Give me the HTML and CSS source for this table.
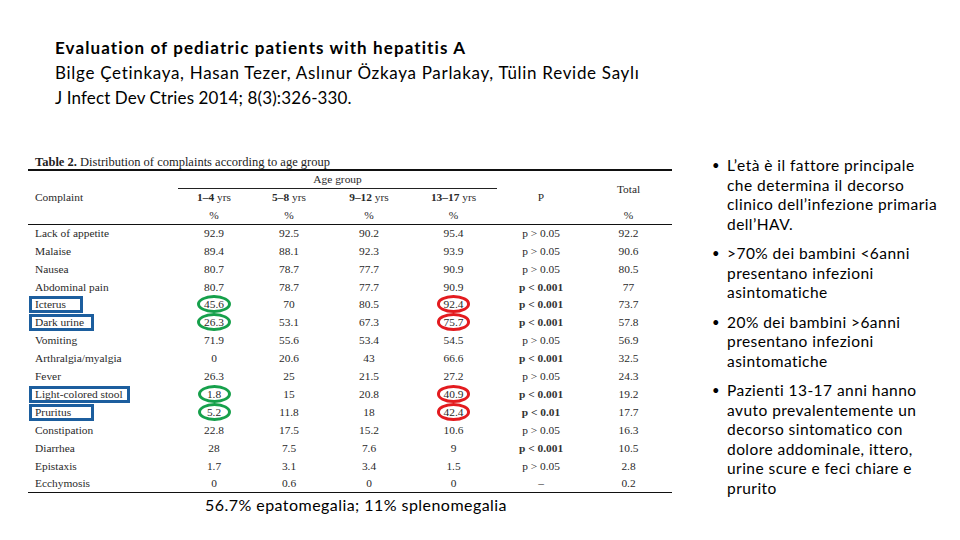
FILE: index.html
```html
<!DOCTYPE html>
<html lang="it">
<head>
<meta charset="utf-8">
<title>Evaluation of pediatric patients with hepatitis A</title>
<link rel="stylesheet" href="styles.css">
</head>
<body>
<header class="ref">
  <div class="ref-title">Evaluation of pediatric patients with hepatitis A</div>
  <div class="ref-line ref-authors">Bilge Çetinkaya, Hasan Tezer, Aslınur Özkaya Parlakay, Tülin Revide Saylı</div>
  <div class="ref-line ref-journal">J Infect Dev Ctries 2014; 8(3):326-330.</div>
</header>
<main class="main">
  <section class="figure">
    <div class="tbl-title"><b>Table 2.</b> Distribution of complaints according to age group</div>
    <table class="tbl">
      <colgroup>
        <col class="c-name"><col class="c-a"><col class="c-b"><col class="c-c"><col class="c-d"><col class="c-p"><col class="c-t">
      </colgroup>
      <thead>
        <tr class="h1">
          <th rowspan="3" class="left">Complaint</th>
          <th colspan="4" class="age">Age group</th>
          <th rowspan="3" class="ph">P</th>
          <th rowspan="2">Total</th>
        </tr>
        <tr class="h2">
          <th><b>1–4</b> yrs</th><th><b>5–8</b> yrs</th><th><b>9–12</b> yrs</th><th><b>13–17</b> yrs</th>
        </tr>
        <tr class="h3">
          <th>%</th><th>%</th><th>%</th><th>%</th><th>%</th>
        </tr>
      </thead>
      <tbody>
        <tr><td class="left">Lack of appetite</td><td>92.9</td><td>92.5</td><td>90.2</td><td>95.4</td><td>p &gt; 0.05</td><td>92.2</td></tr>
        <tr><td class="left">Malaise</td><td>89.4</td><td>88.1</td><td>92.3</td><td>93.9</td><td>p &gt; 0.05</td><td>90.6</td></tr>
        <tr><td class="left">Nausea</td><td>80.7</td><td>78.7</td><td>77.7</td><td>90.9</td><td>p &gt; 0.05</td><td>80.5</td></tr>
        <tr><td class="left">Abdominal pain</td><td>80.7</td><td>78.7</td><td>77.7</td><td>90.9</td><td class="sig">p &lt; 0.001</td><td>77</td></tr>
        <tr><td class="left"><span class="box box-icterus">Icterus</span></td><td><span class="ring green">45.6</span></td><td>70</td><td>80.5</td><td><span class="ring red">92.4</span></td><td class="sig">p &lt; 0.001</td><td>73.7</td></tr>
        <tr><td class="left"><span class="box box-dark">Dark urine</span></td><td><span class="ring green">26.3</span></td><td>53.1</td><td>67.3</td><td><span class="ring red">75.7</span></td><td class="sig">p &lt; 0.001</td><td>57.8</td></tr>
        <tr><td class="left">Vomiting</td><td>71.9</td><td>55.6</td><td>53.4</td><td>54.5</td><td>p &gt; 0.05</td><td>56.9</td></tr>
        <tr><td class="left">Arthralgia/myalgia</td><td>0</td><td>20.6</td><td>43</td><td>66.6</td><td class="sig">p &lt; 0.001</td><td>32.5</td></tr>
        <tr><td class="left">Fever</td><td>26.3</td><td>25</td><td>21.5</td><td>27.2</td><td>p &gt; 0.05</td><td>24.3</td></tr>
        <tr><td class="left"><span class="box box-stool">Light-colored stool</span></td><td><span class="ring green">1.8</span></td><td>15</td><td>20.8</td><td><span class="ring red">40.9</span></td><td class="sig">p &lt; 0.001</td><td>19.2</td></tr>
        <tr><td class="left"><span class="box box-pruritus">Pruritus</span></td><td><span class="ring green">5.2</span></td><td>11.8</td><td>18</td><td><span class="ring red">42.4</span></td><td class="sig">p &lt; 0.01</td><td>17.7</td></tr>
        <tr><td class="left">Constipation</td><td>22.8</td><td>17.5</td><td>15.2</td><td>10.6</td><td>p &gt; 0.05</td><td>16.3</td></tr>
        <tr><td class="left">Diarrhea</td><td>28</td><td>7.5</td><td>7.6</td><td>9</td><td class="sig">p &lt; 0.001</td><td>10.5</td></tr>
        <tr><td class="left">Epistaxis</td><td>1.7</td><td>3.1</td><td>3.4</td><td>1.5</td><td>p &gt; 0.05</td><td>2.8</td></tr>
        <tr><td class="left">Ecchymosis</td><td>0</td><td>0.6</td><td>0</td><td>0</td><td>–</td><td>0.2</td></tr>
      </tbody>
    </table>
    <p class="note">56.7% epatomegalia; 11% splenomegalia</p>
  </section>
  <ul class="bullets">
    <li>L’età è il fattore principale<br>che determina il decorso<br>clinico dell’infezione primaria<br>dell’HAV.</li>
    <li>&gt;70% dei bambini &lt;6anni<br>presentano infezioni<br>asintomatiche</li>
    <li>20% dei bambini &gt;6anni<br>presentano infezioni<br>asintomatiche</li>
    <li>Pazienti 13-17 anni hanno<br>avuto prevalentemente un<br>decorso sintomatico con<br>dolore addominale, ittero,<br>urine scure e feci chiare e<br>prurito</li>
  </ul>
</main>
</body>
</html>
```
FILE: styles.css
```css
* { box-sizing: border-box; }
html, body { margin: 0; padding: 0; background: #ffffff; }
body {
  width: 960px;
  height: 540px;
  overflow: hidden;
  font-family: "Lato", "Liberation Sans", sans-serif;
  color: #000000;
}

.ref {
  padding: 35px 0 0 55px;
  font-size: 17px;
  line-height: 25px;
}
.ref-title { font-weight: 700; letter-spacing: 1.1px; }
.ref-authors { letter-spacing: 0.7px; }
.ref-journal { letter-spacing: 0.12px; }

.main {
  display: flex;
  align-items: flex-start;
  margin-top: 45px;
}

.figure {
  margin-left: 28px;
  width: 644px;
  flex: none;
}

.tbl-title {
  font-family: "Liberation Serif", "Times New Roman", serif;
  font-size: 12.5px;
  line-height: 14px;
  color: #222;
  padding-left: 7px;
}

.tbl {
  width: 644px;
  border-collapse: collapse;
  table-layout: fixed;
  font-family: "Liberation Serif", "Times New Roman", serif;
  font-size: 11.4px;
  color: #2a2a2a;
  border-top: 2px solid #111;
  border-bottom: 1.5px solid #111;
}
.c-name { width: 150px; }
.c-a { width: 72px; }
.c-b { width: 78px; }
.c-c { width: 82px; }
.c-d { width: 87px; }
.c-p { width: 88px; }
.c-t { width: 87px; }

.tbl th, .tbl td {
  padding: 0;
  text-align: center;
  font-weight: 400;
  white-space: nowrap;
  line-height: 12px;
}
.tbl th b { font-weight: 700; }
.tbl .left { text-align: left; padding-left: 7px; }
.tbl thead tr { height: 18px; }
.tbl thead tr.h3 { border-bottom: 1.5px solid #111; }
.tbl th.age { border-bottom: 1px solid #222; }
.tbl tbody tr { height: 17.86px; }
.tbl td.sig { font-weight: 700; color: #333; }

.box {
  display: inline-block;
  margin-left: -6px;
  padding: 0 3px;
  border: 3px solid #1c5e9e;
  height: 17px;
  line-height: 11px;
}
.box-icterus { width: 54px; }
.box-dark { width: 65px; }
.box-stool { width: 101px; }
.box-pruritus { width: 65px; }

.ring {
  display: inline-block;
  padding: 0 4px;
  border: 3px solid;
  border-radius: 50%;
  height: 18px;
  line-height: 12px;
  min-width: 33px;
}
.ring.green { border-color: #16a04b; }
.ring.red { border-color: #e31b1f; }

.note {
  margin: 2px 0 0 177px;
  font-size: 16px;
  line-height: 20px;
  letter-spacing: 0.45px;
}

.bullets {
  list-style: none;
  margin: 1px 0 0 40px;
  padding: 0;
  font-size: 15.5px;
  line-height: 19.5px;
  letter-spacing: 0.45px;
}
.bullets li {
  position: relative;
  padding-left: 15px;
  margin-bottom: 10px;
}
.bullets li::before {
  content: "•";
  position: absolute;
  left: 0;
  top: 0;
  font-size: 13px;
}
```
